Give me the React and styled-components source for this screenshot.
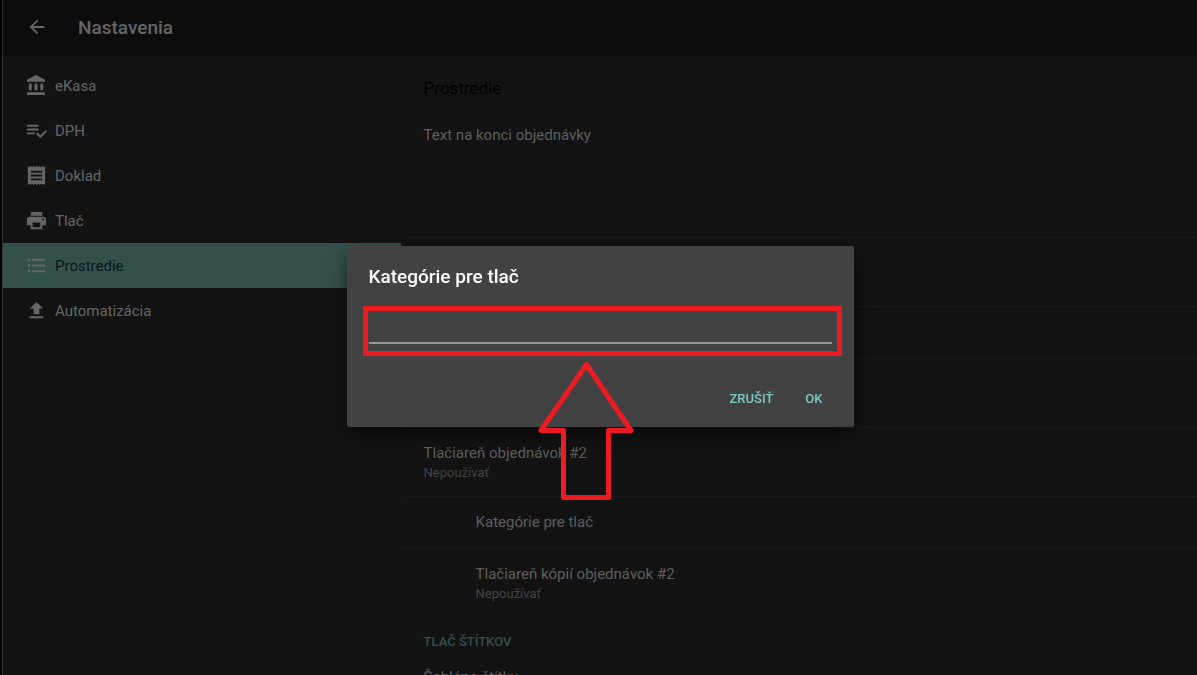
import React from "react";
import styled, { createGlobalStyle } from "styled-components";
import {
  MdArrowBack,
  MdReceipt,
  MdPrint,
  MdFormatListBulleted,
  MdFileUpload,
} from "react-icons/md";

const BankIcon = () => (
  <svg viewBox="0 0 24 24" width="1em" height="1em" fill="currentColor">
    <path d="M4 10v7h3v-7H4zm6 0v7h3v-7h-3zM2 22h19v-3H2v3zm14-12v7h3v-7h-3zm-4.5-9L2 6v2h19V6l-9.5-5z" />
  </svg>
);

const ChecklistIcon = () => (
  <svg viewBox="0 0 24 24" width="1em" height="1em" fill="currentColor">
    <path d="M14 10H2v2h12v-2zm0-4H2v2h12V6zM2 16h8v-2H2v2zm19.5-4.5L23 13l-6.99 7-4.51-4.5L13 14l3.01 3 5.49-5.5z" />
  </svg>
);

const menuItems = [
  { label: "eKasa", Icon: BankIcon },
  { label: "DPH", Icon: ChecklistIcon },
  { label: "Doklad", Icon: MdReceipt },
  { label: "Tlač", Icon: MdPrint },
  { label: "Prostredie", Icon: MdFormatListBulleted, active: true },
  { label: "Automatizácia", Icon: MdFileUpload },
];

const App = () => {
  return (
    <>
      <GlobalStyle />
      <Root>
        <Header>
          <BackButton type="button" aria-label="Späť">
            <MdArrowBack />
          </BackButton>
          <Title>Nastavenia</Title>
        </Header>
        <Main>
          <Menu>
            {menuItems.map(({ label, Icon, active }) => (
              <MenuItem key={label} href="#" $active={active}>
                <Icon />
                {label}
              </MenuItem>
            ))}
          </Menu>
          <Settings>
            <SettingsTitle>Prostredie</SettingsTitle>
            <Setting $size="tall">
              <SettingName>Text na konci objednávky</SettingName>
            </Setting>
            <Setting />
            <Setting $size="small" />
            <Setting />
            <Setting>
              <SettingName>Tlačiareň objednávok #2</SettingName>
              <SettingValue>Nepoužívať</SettingValue>
            </Setting>
            <Setting $size="small" $nested>
              <SettingName>Kategórie pre tlač</SettingName>
            </Setting>
            <Setting $nested $last>
              <SettingName>Tlačiareň kópií objednávok #2</SettingName>
              <SettingValue>Nepoužívať</SettingValue>
            </Setting>
            <SectionTitle>Tlač štítkov</SectionTitle>
            <Setting>
              <SettingName>Šablóna štítku</SettingName>
            </Setting>
          </Settings>
        </Main>
      </Root>
      <Overlay>
        <Dialog role="dialog" aria-labelledby="dialog-title">
          <DialogTitle id="dialog-title">Kategórie pre tlač</DialogTitle>
          <Highlight>
            <Field type="text" aria-labelledby="dialog-title" />
          </Highlight>
          <Actions>
            <ActionButton type="button">Zrušiť</ActionButton>
            <ActionButton type="button">OK</ActionButton>
          </Actions>
          <Arrow viewBox="0 0 96 140" aria-hidden="true">
            <path d="M48.5 3.5 L3 69.5 H25.5 V136.5 H70.5 V69.5 H93 Z" />
          </Arrow>
        </Dialog>
      </Overlay>
    </>
  );
};

const GlobalStyle = createGlobalStyle`
  * {
    box-sizing: border-box;
  }

  body {
    margin: 0;
    background: #000;
    font-family: Roboto, "Liberation Sans", sans-serif;
    overflow: hidden;
  }
`;

const Root = styled.div`
  height: 100vh;
  display: flex;
  flex-direction: column;
  margin-left: 2px;
  border-left: 1px solid #303030;
  background: #131313;
  overflow: hidden;
`;

const Header = styled.header`
  flex: none;
  height: 56px;
  display: flex;
  align-items: center;
  gap: 30px;
  padding: 0 23px;
  background: #0d0d0d;
`;

const BackButton = styled.button`
  display: flex;
  padding: 0 0 2px;
  border: 0;
  background: none;
  color: #666;
  font-size: 22px;
`;

const Title = styled.h1`
  margin: 0;
  font-size: 19px;
  font-weight: 500;
  line-height: 24px;
  color: #666;
`;

const Main = styled.main`
  flex: 1;
  min-height: 0;
  display: flex;
`;

const Menu = styled.nav`
  flex: 0 0 33.3%;
  padding-top: 7px;
`;

const MenuItem = styled.a`
  height: 45px;
  display: flex;
  align-items: center;
  gap: 7px;
  padding-left: 22px;
  background: ${(props) => (props.$active ? "#32514d" : "none")};
  color: ${(props) => (props.$active ? "#0b1514" : "#666")};
  font-size: 15px;
  text-decoration: none;

  svg {
    flex: none;
    color: #666;
    font-size: 23px;
  }
`;

const Settings = styled.section`
  flex: 1;
  min-width: 0;
`;

const SettingsTitle = styled.h2`
  margin: 0;
  padding: 21px 23px 11px;
  font-size: 17px;
  font-weight: 400;
  line-height: 22px;
  color: #020202;
`;

const settingHeights = {
  small: "52px",
  normal: "69px",
  tall: "128px",
};

const Setting = styled.div`
  height: ${(props) => settingHeights[props.$size || "normal"]};
  padding: 15px 23px 0 ${(props) => (props.$nested ? "75px" : "23px")};
  border-bottom: ${(props) => (props.$last ? "0" : "1px solid #1b1b1b")};
`;

const SettingName = styled.div`
  font-size: 15px;
  line-height: 20px;
  color: #5f5f5f;
`;

const SettingValue = styled.div`
  font-size: 13px;
  line-height: 20px;
  color: #444;
`;

const SectionTitle = styled.h3`
  margin: 0;
  padding: 14px 23px 0;
  font-size: 13px;
  font-weight: 500;
  line-height: 20px;
  text-transform: uppercase;
  color: #32514d;
`;

const Overlay = styled.div`
  position: fixed;
  inset: 0 0 0 3px;
  display: flex;
  align-items: center;
  justify-content: center;
  padding-bottom: 2px;
`;

const Dialog = styled.div`
  position: relative;
  width: 507px;
  max-width: 90%;
  padding: 19px 12px 12px 16px;
  border-radius: 2px;
  background: #424242;
  box-shadow: 0 8px 18px rgba(0, 0, 0, 0.5);
`;

const DialogTitle = styled.h2`
  margin: 0 0 17px;
  padding-left: 6px;
  font-size: 19px;
  font-weight: 500;
  line-height: 24px;
  color: #fff;
`;

const Highlight = styled.div`
  height: 50px;
  padding: 0 5px 7px 1px;
  border: 5px solid #ed1c24;
`;

const Field = styled.input`
  display: block;
  width: 100%;
  height: 33px;
  padding: 0 4px;
  border: 0;
  border-bottom: 2px solid #999;
  outline: none;
  background: none;
  color: #fff;
  font: inherit;
  font-size: 17px;
`;

const Actions = styled.div`
  display: flex;
  justify-content: flex-end;
  gap: 8px;
  padding: 25px 7px 0 0;
`;

const ActionButton = styled.button`
  height: 34px;
  padding: 0 12px;
  border: 0;
  background: none;
  color: #80cbc4;
  font-family: inherit;
  font-size: 13px;
  font-weight: 500;
  text-transform: uppercase;
`;

const Arrow = styled.svg`
  position: absolute;
  top: 115px;
  left: 191px;
  width: 96px;
  height: 140px;
  pointer-events: none;

  path {
    fill: none;
    stroke: #ed1c24;
    stroke-width: 5;
    stroke-linejoin: round;
  }
`;

export default App;
